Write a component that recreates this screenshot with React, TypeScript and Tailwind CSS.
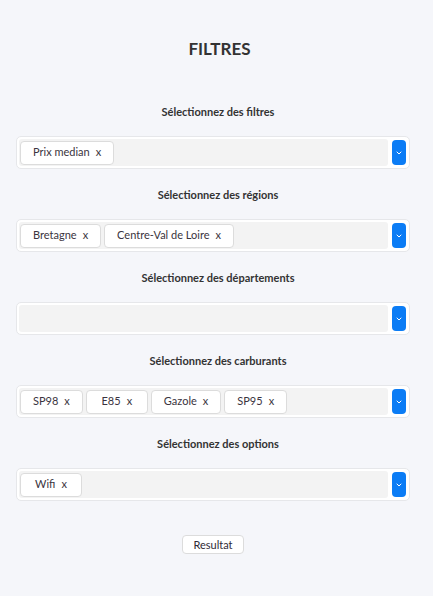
import { ChevronDown } from "lucide-react";

type Section = {
  label: string;
  chips: string[];
};

const sections: Section[] = [
  { label: "Sélectionnez des filtres", chips: ["Prix median"] },
  { label: "Sélectionnez des régions", chips: ["Bretagne", "Centre-Val de Loire"] },
  { label: "Sélectionnez des départements", chips: [] },
  { label: "Sélectionnez des carburants", chips: ["SP98", "E85", "Gazole", "SP95"] },
  { label: "Sélectionnez des options", chips: ["Wifi"] },
];

const MultiSelect = ({ chips }: { chips: string[] }) => {
  return (
    <div className="ml-[16px] w-[394px] h-[33px] flex items-stretch rounded-[5px] border border-[#e6e7ea] bg-white p-[2px]">
      <div className="flex-1 flex items-center gap-[3px] bg-[#f3f3f3] rounded-[3px] pl-[1px]">
        {chips.map((chip) => (
          <span
            key={chip}
            className="h-[24px] min-w-[62px] flex items-center justify-center pl-[12px] pr-[12px] bg-white border border-[#dcdcdc] rounded-[4px] text-[11px] text-[#3a3440]"
          >
            {chip}
            <span className="ml-[6px]">x</span>
          </span>
        ))}
      </div>
      <div className="w-[4px]" />
      <button className="w-[14px] my-[1px] mr-[1px] flex items-center justify-center bg-[#0b7cf5] rounded-[4px]">
        <ChevronDown className="w-[8px] h-[8px] text-white" strokeWidth={3} />
      </button>
    </div>
  );
};

export default function App() {
  return (
    <div
      className="min-h-[596px] w-full bg-[#f5f6fa] text-[#333333] pt-[37px]"
      style={{ fontFamily: 'Lato, "Open Sans", sans-serif' }}
    >
      <h1 className="text-center text-[17px] leading-[24px] font-bold pl-[6px]">FILTRES</h1>

      <div className="mt-[43px] flex flex-col">
        {sections.map((s, i) => (
          <div key={s.label} className={i === 0 ? "" : "mt-[18px]"}>
            <p className="text-center text-[11px] leading-[16px] font-bold pl-[3px]">{s.label}</p>
            <div className="mt-[16px]">
              <MultiSelect chips={s.chips} />
            </div>
          </div>
        ))}
      </div>

      <div className="ml-[16px] w-[394px] flex justify-center mt-[34px]">
        <button className="w-[62px] h-[19px] bg-white border border-[#dcdcdc] rounded-[4px] text-[11px] text-[#2f2a36] leading-none">
          Resultat
        </button>
      </div>
    </div>
  );
}
